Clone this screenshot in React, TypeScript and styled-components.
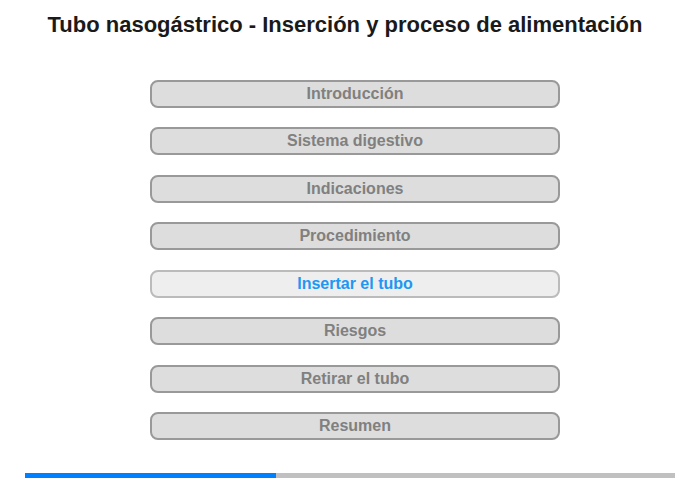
import { createGlobalStyle, styled } from 'styled-components'

const GlobalStyle = createGlobalStyle`
  html, body {
    margin: 0;
    padding: 0;
    background: #ffffff;
    font-family: 'Liberation Sans', Arial, sans-serif;
  }
`

const sections = [
  'Introducción',
  'Sistema digestivo',
  'Indicaciones',
  'Procedimiento',
  'Insertar el tubo',
  'Riesgos',
  'Retirar el tubo',
  'Resumen'
]

const activeIndex = 4
const progress = 38.6

const App = () => {
  return (
    <Page>
      <GlobalStyle />
      <Title>Tubo nasogástrico - Inserción y proceso de alimentación</Title>
      <Menu>
        {sections.map((label, i) => (
          <MenuButton key={label} $active={i === activeIndex}>
            {label}
          </MenuButton>
        ))}
      </Menu>
      <ProgressTrack>
        <ProgressFill style={{ width: `${progress}%` }} />
      </ProgressTrack>
    </Page>
  )
}

export default App

const Page = styled.div`
  width: 700px;
  height: 480px;
  display: flex;
  flex-direction: column;
  overflow: hidden;
`
const Title = styled.h1`
  margin: 0;
  padding: 12px 10px 0 0;
  font-size: 22px;
  line-height: 26px;
  font-weight: bold;
  color: #1a1a1a;
  text-align: center;
`
const Menu = styled.div`
  display: flex;
  flex-direction: column;
  gap: 19.43px;
  width: 410px;
  margin: 42px 0 0 150px;
`
const MenuButton = styled.div<{ $active: boolean }>`
  box-sizing: border-box;
  height: 28px;
  display: flex;
  align-items: center;
  justify-content: center;
  border: 2px solid ${p => (p.$active ? '#bbbbbb' : '#999999')};
  border-radius: 8px;
  background: ${p => (p.$active ? '#eeeeee' : '#dddddd')};
  color: ${p => (p.$active ? '#2196f3' : '#808080')};
  font-size: 16px;
  font-weight: bold;
  cursor: pointer;
`
const ProgressTrack = styled.div`
  margin: 33px 0 0 25px;
  width: 650px;
  height: 5px;
  background: #c0c0c0;
`
const ProgressFill = styled.div`
  height: 100%;
  background: #0080ff;
`
